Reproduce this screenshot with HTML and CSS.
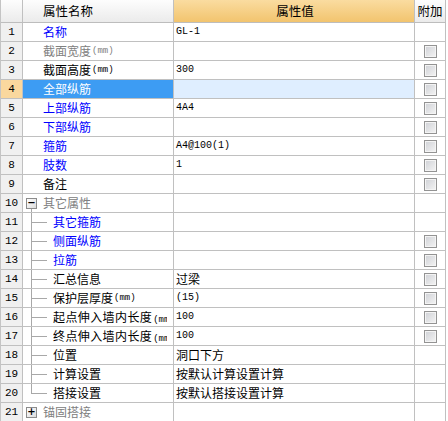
FILE: index.html
```html
<!DOCTYPE html>
<html>
<head>
<meta charset="utf-8">
<link rel="stylesheet" href="styles.css">
</head>
<body>
<div class="table">
  <div class="row head">
    <div class="c num"></div>
    <div class="c name hc">属性名称</div>
    <div class="c val hc hv">属性值</div>
    <div class="c add hc">附加</div>
  </div>

  <div class="row"><div class="c num">1</div><div class="c name blue">名称</div><div class="c val mono">GL-1</div><div class="c add"></div></div>
  <div class="row"><div class="c num">2</div><div class="c name gray">截面宽度<span class="unit">(mm)</span></div><div class="c val"></div><div class="c add"><span class="cb"></span></div></div>
  <div class="row"><div class="c num">3</div><div class="c name">截面高度<span class="unit">(mm)</span></div><div class="c val mono">300</div><div class="c add"><span class="cb"></span></div></div>
  <div class="row sel"><div class="c num">4</div><div class="c name">全部纵筋</div><div class="c val"></div><div class="c add"><span class="cb"></span></div></div>
  <div class="row"><div class="c num">5</div><div class="c name blue">上部纵筋</div><div class="c val mono">4A4</div><div class="c add"><span class="cb"></span></div></div>
  <div class="row"><div class="c num">6</div><div class="c name blue">下部纵筋</div><div class="c val"></div><div class="c add"><span class="cb"></span></div></div>
  <div class="row"><div class="c num">7</div><div class="c name blue">箍筋</div><div class="c val mono">A4@100(1)</div><div class="c add"><span class="cb"></span></div></div>
  <div class="row"><div class="c num">8</div><div class="c name blue">肢数</div><div class="c val mono">1</div><div class="c add"><span class="cb"></span></div></div>
  <div class="row"><div class="c num">9</div><div class="c name">备注</div><div class="c val"></div><div class="c add"><span class="cb"></span></div></div>

  <div class="row"><div class="c num">10</div><div class="c name gray grp"><span class="exp open"><span class="box">−</span></span>其它属性</div><div class="c val"></div><div class="c add"></div></div>
  <div class="row"><div class="c num">11</div><div class="c name blue grp"><span class="tree"></span>其它箍筋</div><div class="c val"></div><div class="c add"></div></div>
  <div class="row"><div class="c num">12</div><div class="c name blue grp"><span class="tree"></span>侧面纵筋</div><div class="c val"></div><div class="c add"><span class="cb"></span></div></div>
  <div class="row"><div class="c num">13</div><div class="c name blue grp"><span class="tree"></span>拉筋</div><div class="c val"></div><div class="c add"><span class="cb"></span></div></div>
  <div class="row"><div class="c num">14</div><div class="c name grp"><span class="tree"></span>汇总信息</div><div class="c val">过梁</div><div class="c add"><span class="cb"></span></div></div>
  <div class="row"><div class="c num">15</div><div class="c name grp"><span class="tree"></span>保护层厚度<span class="unit">(mm)</span></div><div class="c val mono">(15)</div><div class="c add"><span class="cb"></span></div></div>
  <div class="row"><div class="c num">16</div><div class="c name grp"><span class="tree"></span><span class="lbl">起点伸入墙内长度<span class="unit">(mm)</span></span></div><div class="c val mono">100</div><div class="c add"><span class="cb"></span></div></div>
  <div class="row"><div class="c num">17</div><div class="c name grp"><span class="tree"></span><span class="lbl">终点伸入墙内长度<span class="unit">(mm)</span></span></div><div class="c val mono">100</div><div class="c add"><span class="cb"></span></div></div>
  <div class="row"><div class="c num">18</div><div class="c name grp"><span class="tree"></span>位置</div><div class="c val">洞口下方</div><div class="c add"></div></div>
  <div class="row"><div class="c num">19</div><div class="c name grp"><span class="tree"></span>计算设置</div><div class="c val">按默认计算设置计算</div><div class="c add"></div></div>
  <div class="row"><div class="c num">20</div><div class="c name grp"><span class="tree last"></span>搭接设置</div><div class="c val">按默认搭接设置计算</div><div class="c add"></div></div>
  <div class="row"><div class="c num">21</div><div class="c name gray grp"><span class="exp"><span class="box">+</span></span>锚固搭接</div><div class="c val"></div><div class="c add"></div></div>
</div>
</body>
</html>
```
FILE: styles.css
```css
html, body {
  margin: 0;
  padding: 0;
  background: #ffffff;
}
body {
  font-family: "Noto Sans CJK SC", sans-serif;
  font-size: 12px;
  color: #000000;
}
.table {
  width: 446px;
  border-left: 1px solid #c4c4c4;
  box-sizing: border-box;
}
.row {
  display: grid;
  grid-template-columns: 22px 151px 241px 31px;
  height: 19px;
}
.row.head {
  height: 23px;
}
.c {
  box-sizing: border-box;
  border-right: 1px solid #c0c0c0;
  border-bottom: 1px solid #c0c0c0;
  line-height: 18px;
  white-space: nowrap;
  overflow: hidden;
}
.head .c {
  line-height: 22px;
  background: linear-gradient(#fdfdfd, #ebebeb);
  border-bottom-color: #bdbdbd;
}
.head .hc {
  text-align: center;
  font-size: 12.5px;
}
.head .hv {
  background: linear-gradient(#fadca0, #f2c46e);
}
.head .add {
  padding: 0;
  overflow: visible;
}
.num {
  background: #f0f0f0;
  text-align: center;
  font-family: "Liberation Mono", monospace;
  font-size: 11px;
}
.name {
  padding-left: 20px;
  display: flex;
  align-items: stretch;
}
.name.grp {
  padding-left: 0;
}
.lbl {
  flex: 0 1 auto;
  min-width: 0;
  overflow: hidden;
  margin-right: 6px;
  letter-spacing: 0.4px;
}
.val {
  padding-left: 2px;
}
.mono {
  font-family: "Liberation Mono", "Noto Sans CJK SC", monospace;
  font-size: 10px;
}
.unit {
  font-family: "Liberation Mono", monospace;
  font-size: 9px;
  padding-left: 1px;
  letter-spacing: 0;
}
.blue { color: #0000ff; }
.gray { color: #808080; }

.sel .num { background: #fad89e; }
.sel .name { background: #3d9cf3; color: #ffffff; }
.sel .val { background: #dfeeff; }

.add {
  display: flex;
  align-items: center;
  justify-content: center;
}
.cb {
  width: 13px;
  height: 13px;
  box-sizing: border-box;
  border: 1px solid #939393;
  background: linear-gradient(135deg, #cfd1d6, #f4f4f4);
  box-shadow: inset 0 0 0 1px #f4f4f4;
  margin-left: 1px;
}

.tree {
  width: 16px;
  margin-left: 8px;
  margin-right: 6px;
  flex: none;
  background:
    linear-gradient(#a8a8a8, #a8a8a8) no-repeat 0 0 / 1px 100%,
    linear-gradient(#a8a8a8, #a8a8a8) no-repeat 0 50% / 100% 1px;
}
.tree.last {
  background:
    linear-gradient(#a8a8a8, #a8a8a8) no-repeat 0 0 / 1px 50%,
    linear-gradient(#a8a8a8, #a8a8a8) no-repeat 0 50% / 100% 1px;
}
.exp {
  width: 11px;
  margin-left: 3px;
  margin-right: 6px;
  flex: none;
  display: flex;
  align-items: center;
}
.exp.open {
  background: linear-gradient(#a8a8a8, #a8a8a8) no-repeat 5px 100% / 1px 50%;
}
.box {
  width: 11px;
  height: 11px;
  box-sizing: border-box;
  border: 1px solid #8c8c8c;
  background: linear-gradient(135deg, #ffffff, #dcdcdc);
  color: #000000;
  font-family: "DejaVu Sans", sans-serif;
  font-size: 10px;
  line-height: 8px;
  text-align: center;
  font-weight: bold;
}
```
